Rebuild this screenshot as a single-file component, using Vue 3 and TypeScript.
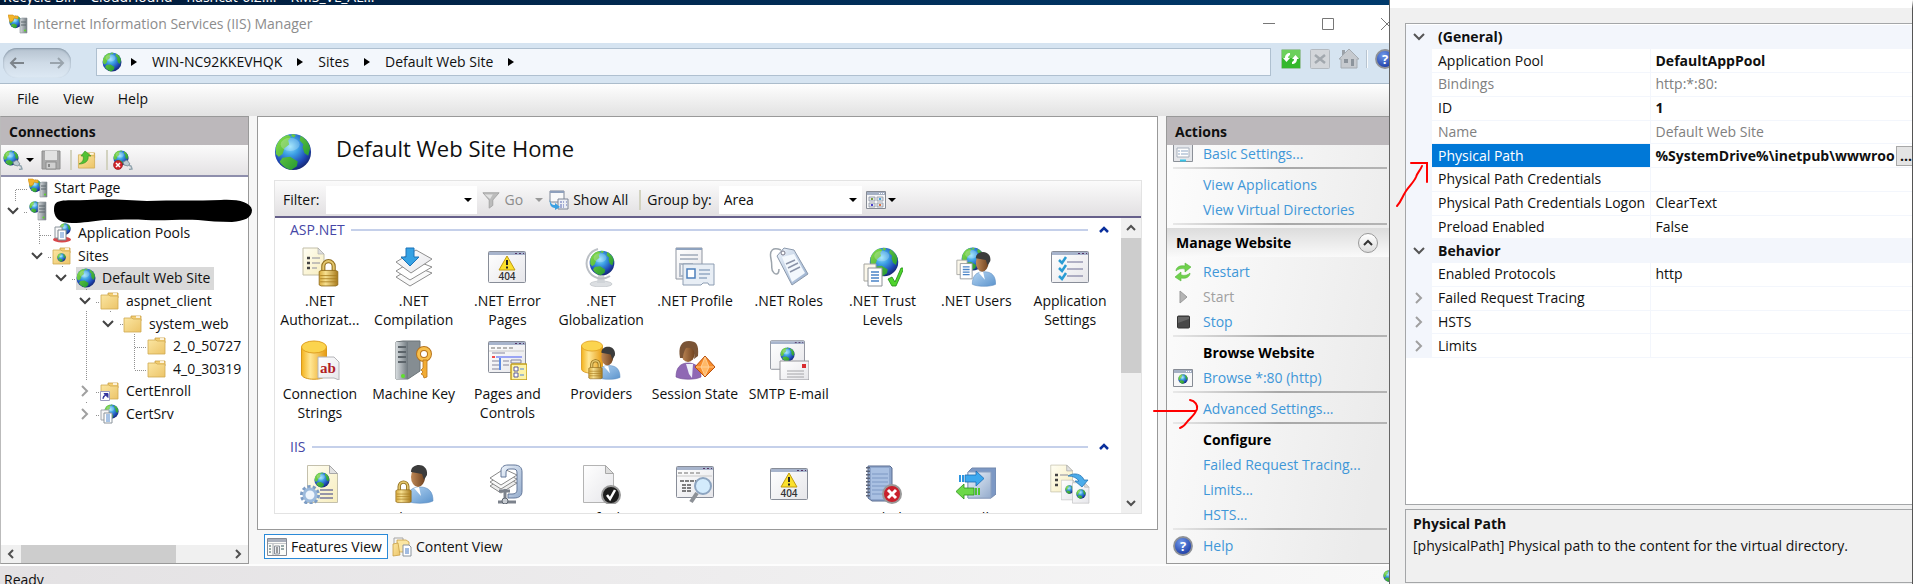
<script setup lang="ts">
import { ref } from 'vue'

interface TreeNode {
  label: string
  icon: string
  level: number
  state?: 'open' | 'closed'
  selected?: boolean
  hidden?: boolean
}

interface Feature {
  icon: string
  lines: string[]
}

interface ActionRow {
  kind: 'link' | 'title' | 'line' | 'header'
  label?: string
  icon?: string
  disabled?: boolean
  arrow?: boolean
}

interface Property {
  name: string
  value?: string
  kind?: 'group' | 'child'
  strong?: boolean
  muted?: boolean
  selected?: boolean
}

const desktop = ['Recycle Bin', 'CloudHound', 'hashcat-6.2....', 'KMS_VL_AL...']
const crumbs = ['WIN-NC92KKEVHQK', 'Sites', 'Default Web Site']
const menus = ['File', 'View', 'Help']

const tree: TreeNode[] = [
  { label: 'Start Page', icon: 'i-start', level: 0 },
  { label: '', icon: 'i-server', level: 0, state: 'open', hidden: true },
  { label: 'Application Pools', icon: 'i-pools', level: 1 },
  { label: 'Sites', icon: 'i-sites', level: 1, state: 'open' },
  { label: 'Default Web Site', icon: 'i-globe', level: 2, state: 'open', selected: true },
  { label: 'aspnet_client', icon: 'i-folder', level: 3, state: 'open' },
  { label: 'system_web', icon: 'i-folder', level: 4, state: 'open' },
  { label: '2_0_50727', icon: 'i-folder', level: 5 },
  { label: '4_0_30319', icon: 'i-folder', level: 5 },
  { label: 'CertEnroll', icon: 'i-vdir', level: 3, state: 'closed' },
  { label: 'CertSrv', icon: 'i-app', level: 3, state: 'closed' }
]

const sections: { name: string; items: Feature[] }[] = [
  {
    name: 'ASP.NET',
    items: [
      { icon: 'f-auth', lines: ['.NET', 'Authorizat...'] },
      { icon: 'f-comp', lines: ['.NET', 'Compilation'] },
      { icon: 'f-404', lines: ['.NET Error', 'Pages'] },
      { icon: 'f-global', lines: ['.NET', 'Globalization'] },
      { icon: 'f-profile', lines: ['.NET Profile'] },
      { icon: 'f-roles', lines: ['.NET Roles'] },
      { icon: 'f-trust', lines: ['.NET Trust', 'Levels'] },
      { icon: 'f-users', lines: ['.NET Users'] },
      { icon: 'f-settings', lines: ['Application', 'Settings'] },
      { icon: 'f-conn', lines: ['Connection', 'Strings'] },
      { icon: 'f-key', lines: ['Machine Key'] },
      { icon: 'f-pages', lines: ['Pages and', 'Controls'] },
      { icon: 'f-providers', lines: ['Providers'] },
      { icon: 'f-session', lines: ['Session State'] },
      { icon: 'f-smtp', lines: ['SMTP E-mail'] }
    ]
  },
  {
    name: 'IIS',
    items: [
      { icon: 'f-asp', lines: ['ASP'] },
      { icon: 'f-authn', lines: ['Authentic...'] },
      { icon: 'f-compress', lines: ['Compression'] },
      { icon: 'f-default', lines: ['Default'] },
      { icon: 'f-browse', lines: ['Directory'] },
      { icon: 'f-404', lines: ['Error Pages'] },
      { icon: 'f-failed', lines: ['Failed'] },
      { icon: 'f-handler', lines: ['Handler'] },
      { icon: 'f-redirect', lines: ['HTTP'] }
    ]
  }
]

const actions: ActionRow[] = [
  { kind: 'link', label: 'Basic Settings...', icon: 'i-basic' },
  { kind: 'line' },
  { kind: 'link', label: 'View Applications' },
  { kind: 'link', label: 'View Virtual Directories' },
  { kind: 'line' },
  { kind: 'header', label: 'Manage Website' },
  { kind: 'link', label: 'Restart', icon: 'i-restart' },
  { kind: 'link', label: 'Start', icon: 'i-play', disabled: true },
  { kind: 'link', label: 'Stop', icon: 'i-stop' },
  { kind: 'line' },
  { kind: 'title', label: 'Browse Website' },
  { kind: 'link', label: 'Browse *:80 (http)', icon: 'i-browse' },
  { kind: 'line' },
  { kind: 'link', label: 'Advanced Settings...', arrow: true },
  { kind: 'line' },
  { kind: 'title', label: 'Configure' },
  { kind: 'link', label: 'Failed Request Tracing...' },
  { kind: 'link', label: 'Limits...' },
  { kind: 'link', label: 'HSTS...' },
  { kind: 'line' },
  { kind: 'link', label: 'Help', icon: 'i-help' }
]

const properties: Property[] = [
  { name: '(General)', kind: 'group' },
  { name: 'Application Pool', value: 'DefaultAppPool', strong: true },
  { name: 'Bindings', value: 'http:*:80:', muted: true },
  { name: 'ID', value: '1', strong: true },
  { name: 'Name', value: 'Default Web Site', muted: true },
  { name: 'Physical Path', value: '%SystemDrive%\\inetpub\\wwwroo', strong: true, selected: true },
  { name: 'Physical Path Credentials' },
  { name: 'Physical Path Credentials Logon', value: 'ClearText' },
  { name: 'Preload Enabled', value: 'False' },
  { name: 'Behavior', kind: 'group' },
  { name: 'Enabled Protocols', value: 'http' },
  { name: 'Failed Request Tracing', kind: 'child' },
  { name: 'HSTS', kind: 'child' },
  { name: 'Limits', kind: 'child' }
]

const filter = ref('')
const groupBy = ref('Area')
</script>

<template>
  <svg class="defs" aria-hidden="true">
    <defs>
      <radialGradient id="sea" cx=".42" cy=".35" r=".68">
        <stop offset="0" stop-color="#8fe0fa" /><stop offset=".35" stop-color="#3c9fe4" />
        <stop offset=".75" stop-color="#1f47b4" /><stop offset="1" stop-color="#15256e" />
      </radialGradient>
      <linearGradient id="land" x1="0" y1="0" x2="1" y2="1">
        <stop offset="0" stop-color="#8be04a" /><stop offset="1" stop-color="#0e8a2c" />
      </linearGradient>
      <linearGradient id="gold" x1="0" y1="0" x2="1" y2="0">
        <stop offset="0" stop-color="#d8aa3c" /><stop offset=".35" stop-color="#f7e090" /><stop offset="1" stop-color="#a87a1c" />
      </linearGradient>
      <linearGradient id="db" x1="0" y1="0" x2="1" y2="0">
        <stop offset="0" stop-color="#f3b21c" /><stop offset=".35" stop-color="#ffe795" /><stop offset="1" stop-color="#e79a10" />
      </linearGradient>
      <linearGradient id="manila" x1="0" y1="0" x2="1" y2="1">
        <stop offset="0" stop-color="#fbe6a2" /><stop offset="1" stop-color="#ecc468" />
      </linearGradient>
      <linearGradient id="paper" x1="0" y1="0" x2="1" y2="1">
        <stop offset="0" stop-color="#ffffff" /><stop offset="1" stop-color="#e6e6ea" />
      </linearGradient>
      <linearGradient id="cream" x1="0" y1="0" x2="1" y2="1">
        <stop offset="0" stop-color="#fffef4" /><stop offset="1" stop-color="#f7edbd" />
      </linearGradient>
      <linearGradient id="steel" x1="0" y1="0" x2="1" y2="1">
        <stop offset="0" stop-color="#eef4fb" /><stop offset="1" stop-color="#93abcc" />
      </linearGradient>
      <linearGradient id="shirt" x1="0" y1="0" x2="1" y2="1">
        <stop offset="0" stop-color="#b4d5f3" /><stop offset="1" stop-color="#5b93cc" />
      </linearGradient>
      <linearGradient id="skin" x1="0" y1="0" x2="1" y2="0">
        <stop offset="0" stop-color="#c08a58" /><stop offset="1" stop-color="#70421f" />
      </linearGradient>
      <linearGradient id="case" x1="0" y1="0" x2="1" y2="0">
        <stop offset="0" stop-color="#d5dadd" /><stop offset="1" stop-color="#6f787e" />
      </linearGradient>
      <radialGradient id="helpblue" cx=".4" cy=".3" r=".8">
        <stop offset="0" stop-color="#6f98ea" /><stop offset="1" stop-color="#12309c" />
      </radialGradient>
    </defs>

    <symbol id="i-globe" viewBox="0 0 40 40">
      <circle cx="20" cy="20" r="19" fill="url(#sea)" />
      <path fill="url(#land)" d="M2 15C4 8 9 3 15 2l3 2-3 4 1 4-5 4-2 6-4 3-3-3zM28 3c5 3 9 7 10 13l-2 8-4-3-2-6 1-3-4-4zM9 26l8-1 8 5-1 5-6 4c-5-1-10-5-12-9zM19 1l4 1-2 3-3-2z" />
      <ellipse cx="17" cy="12" rx="10" ry="7" fill="#fff" opacity=".22" />
    </symbol>
    <symbol id="i-start" viewBox="0 0 20 20">
      <use href="#i-globe" x="1" y="1" width="13" height="14" />
      <path d="M0 1h5l1 1h4v3l-4-1-1 3-3 1z" fill="#f3b52b" stroke="#d08c12" stroke-width=".6" />
      <path d="M12 5l2-1h5v15h-7z" fill="url(#case)" stroke="#8a9298" stroke-width=".6" />
      <path d="M13 8h5M13 11h5" stroke="#5d666c" /><circle cx="17" cy="16.500" r="1" fill="#58d824" />
    </symbol>
    <symbol id="i-server" viewBox="0 0 20 20">
      <use href="#i-globe" x="1" y="0" width="12" height="12" />
      <path d="M10 2l2-1h6v18h-8z" fill="url(#case)" stroke="#8a9298" stroke-width=".6" />
      <path d="M11 5h6M11 8h6M11 11h6" stroke="#5d666c" /><circle cx="15.500" cy="16.500" r="1" fill="#58d824" />
    </symbol>
    <symbol id="i-pools" viewBox="0 0 20 20">
      <use href="#i-globe" x="7" y="0" width="12" height="12" />
      <ellipse cx="10" cy="16.500" rx="9" ry="3" fill="#d8474a" />
      <path d="M3 4h7v11H3z" fill="#f8f8f8" stroke="#8b949c" /><path d="M6 7h8v10H6z" fill="#fff" stroke="#7c868e" />
      <path d="M8 10h4M8 12h4M8 14h4" stroke="#5b8fd0" />
    </symbol>
    <symbol id="i-folder" viewBox="0 0 20 20">
      <path d="M8 2h10v5H8z" fill="#f5cf72" stroke="#c9a045" stroke-width=".8" /><path d="M13 3h4" stroke="#fff" stroke-width="1.500" />
      <path d="M1 4h8l1 1h8v13H1z" fill="url(#manila)" stroke="#cfa950" stroke-width=".8" />
    </symbol>
    <symbol id="i-sites" viewBox="0 0 20 20"><use href="#i-folder" width="20" height="20" /><use href="#i-globe" x="5" y="7" width="9" height="9" /></symbol>
    <symbol id="i-vdir" viewBox="0 0 20 20">
      <use href="#i-folder" width="20" height="20" /><path d="M.500 10.500h9v9h-9z" fill="#fff" stroke="#9a9ac0" />
      <path d="M3 18c0-3 1-4 3-4M4 12.500l4 0v4z" fill="#34349c" stroke="#34349c" />
    </symbol>
    <symbol id="i-app" viewBox="0 0 20 20">
      <use href="#i-globe" x="4" y="0" width="15" height="15" />
      <path d="M1 6h8v10H1z" fill="#f6f6f6" stroke="#a0a6ac" /><path d="M4 9h8v10H4z" fill="#fff" stroke="#8b949c" />
      <path d="M6 11h4M6 13h4M6 15h4M6 17h4" stroke="#4f87cc" />
    </symbol>
    <symbol id="i-connect" viewBox="0 0 20 20">
      <use href="#i-globe" width="16" height="16" />
      <path d="M10 12l4-2 3 4-2 2-4-1z" fill="#bccbd3" stroke="#71828c" stroke-width=".8" /><path d="M15 15l3 1 1 3-3 .500" fill="none" stroke="#91a4ae" stroke-width="1.500" />
    </symbol>
    <symbol id="i-disconnect" viewBox="0 0 20 20">
      <use href="#i-connect" width="20" height="20" /><circle cx="5" cy="15" r="4.500" fill="#d2232a" stroke="#8d1418" stroke-width=".6" />
      <path d="M3 13l4 4M7 13l-4 4" stroke="#fff" stroke-width="1.500" />
    </symbol>
    <symbol id="i-save" viewBox="0 0 20 20">
      <path d="M1 1h18v18H1z" fill="#a9a9a9" stroke="#8e8e8e" /><path d="M4 1h12v9H4z" fill="#e2e2e2" /><path d="M5 12h10v7H5z" fill="#cfcfcf" stroke="#8e8e8e" /><path d="M7 14h2v3H7z" fill="#888" />
    </symbol>
    <symbol id="i-up" viewBox="0 0 20 20">
      <use href="#i-folder" y="1" width="20" height="19" /><path d="M2 14c4-2 5-5 4-8H4l4-5 6 5h-3c1 4-2 8-9 8z" fill="#52c234" stroke="#2f8f1c" stroke-width=".6" />
    </symbol>
    <symbol id="i-win" viewBox="0 0 20 20">
      <path d="M.500 1.500h19v17H.500z" fill="#f7f7f8" stroke="#868b94" /><path d="M1 2h18v3H1z" fill="#a5b0c4" /><path d="M13 3.500h1M15 3.500h1M17 3.500h1" stroke="#fff" />
    </symbol>
    <symbol id="i-browse" viewBox="0 0 20 20"><use href="#i-win" width="20" height="20" /><use href="#i-globe" x="5" y="6" width="10" height="10" /></symbol>
    <symbol id="i-basic" viewBox="0 0 20 20">
      <path d="M.500 0h19v17.500H.500z" fill="#e4e6ea" stroke="#8b9098" /><path d="M4 4h12v9H4z" fill="#fff" stroke="#a8b0bc" /><path d="M5 7h2M8 7h7M5 10h2M8 10h7" stroke="#8fa7c4" />
      <path d="M7 16.500h6" stroke="#38c4e8" stroke-width="2" />
    </symbol>
    <symbol id="i-features" viewBox="0 0 20 20">
      <path d="M.500 1.500h19v17H.500z" fill="#fbfbf8" stroke="#868b94" /><path d="M1 2h18v3H1z" fill="#a9afbb" /><path d="M1 6.500h18" stroke="#c5c8cc" />
      <path d="M6 7v11" stroke="#a0a4ac" /><path d="M2 9h2M2 12h2M2 15h2M14 9h3M14 12h3" stroke="#9aa" stroke-width="2" /><path d="M7.500 9h5v8h-5z" fill="#eceef2" stroke="#8a9098" /><path d="M9 11h2M9 13h2M9 15h2" stroke="#444" />
    </symbol>
    <symbol id="i-content" viewBox="0 0 20 20">
      <path d="M2 1h9v12H2z" fill="#f5f5f5" stroke="#a5a5a5" /><path d="M5 3h9l3 2v10H5z" fill="#fbe6a2" stroke="#c9a045" stroke-width=".8" /><path d="M1 7l5-1 2 12-7 1z" fill="url(#manila)" stroke="#c9a045" stroke-width=".8" />
      <path d="M11 8h6l2 2v9h-8z" fill="#fff" stroke="#8b949c" /><path d="M13 12h4M13 14h4M13 16h4" stroke="#4478c4" />
    </symbol>
    <symbol id="i-thumbs" viewBox="0 0 20 20">
      <use href="#i-win" width="20" height="20" /><path d="M3 7h6v4H3zM11 7h6v4h-6zM3 13h6v4H3zM11 13h6v4h-6z" fill="#dfe3ea" stroke="#8d94a2" stroke-width=".8" />
      <path d="M5 9h2" stroke="#7a9c3c" stroke-width="2" /><path d="M13 9h2" stroke="#4aa4d4" stroke-width="2" /><path d="M5 15h2" stroke="#4a3ccc" stroke-width="2" /><path d="M13 15h2" stroke="#dc7444" stroke-width="2" />
    </symbol>
    <symbol id="i-showall" viewBox="0 0 20 20">
      <path d="M1 1h14v11H1z" fill="#fafafa" stroke="#7e8696" /><path d="M1 2h14" stroke="#8fa0bc" stroke-width="2" /><path d="M9 9h10v10H9z" fill="#eceef5" stroke="#7e8696" />
      <path d="M11 12h2M14 12h1M17 12h1M11 15h2M14 15h1M17 15h1M11 17h2M14 17h1" stroke="#5a6bb4" /><path d="M1 9c0 4 2 6 5 6v-2l5 4-5 3v-2c-4 0-6-4-5-9z" fill="#3aa0e2" />
    </symbol>
    <symbol id="i-funnel" viewBox="0 0 20 20"><path d="M1 2h18l-7 8v6l-4 3v-9z" fill="#bcbcbc" stroke="#a2a2a2" /><path d="M3 4h9l-3 5z" fill="#e2e2e2" /></symbol>
    <symbol id="i-restart" viewBox="0 0 20 20">
      <path d="M3 9c0-4 4-6 9-5V1l6 4-6 5V7C8 6 5 7 3 9z" fill="#6fd24c" stroke="#58b63e" stroke-width=".6" /><path d="M17 11c0 4-4 6-9 5v3l-6-4 6-5v3c4 1 7 0 9-2z" fill="#6fd24c" stroke="#58b63e" stroke-width=".6" />
    </symbol>
    <symbol id="i-play" viewBox="0 0 20 20"><path d="M7 4v12l7-6z" fill="#b4b4b4" stroke="#9a9a9a" /></symbol>
    <symbol id="i-stop" viewBox="0 0 20 20"><rect x="4.500" y="4" width="12" height="12" rx="1" fill="#484848" stroke="#333" /><path d="M5 11l11-4V5H5z" fill="#666" /></symbol>
    <symbol id="i-help" viewBox="0 0 20 20">
      <circle cx="10" cy="10" r="9" fill="url(#helpblue)" stroke="#8d9096" stroke-width="1.800" />
      <text x="10" y="15" text-anchor="middle" font-size="13" font-weight="700" font-family="Open Sans, sans-serif" fill="#fff">?</text>
    </symbol>
    <symbol id="i-refresh" viewBox="0 0 20 20">
      <rect x=".500" y=".500" width="19" height="19" rx="1" fill="#35b82c" stroke="#9fc4a4" /><path d="M1 1h18v8H1z" fill="#8fe07c" opacity=".6" />
      <path d="M9 4c-3 0-5 2-5 5H2l3.500 4L9 9H7c0-2 1-2 2-3zM11 15c3 0 5-2 5-5h2l-3.500-4L11 10h2c0 2-1 2-2 3z" fill="#fff" />
    </symbol>
    <symbol id="i-cancel" viewBox="0 0 20 20"><rect x=".500" y=".500" width="19" height="19" rx="1" fill="#d3d6da" stroke="#b4bac0" /><path d="M5 6l10 8M15 6L5 14" stroke="#a2a8ae" stroke-width="2.500" /></symbol>
    <symbol id="i-home" viewBox="0 0 20 20"><path d="M3 1h3v5H3z" fill="#9ba1a8" /><path d="M10 0L0 10h2v9h16v-9h2z" fill="#c6cacf" stroke="#a6acb2" /><path d="M5 10h4v4H5z" fill="#8c949c" /><path d="M12 10h3v7h-3z" fill="#8c949c" /></symbol>

    <symbol id="p-lock" viewBox="0 0 20 28">
      <path d="M5 13V8a5 5 0 0 1 10 0v5" fill="none" stroke="#8e6c1c" stroke-width="4" /><path d="M5 13V8a5 5 0 0 1 10 0v5" fill="none" stroke="#e3c66c" stroke-width="2" />
      <path d="M1 13l2-1h14l2 1v13l-2 1H3l-2-1z" fill="url(#gold)" stroke="#8e6818" stroke-width=".8" /><path d="M2 17h16M2 20h16M2 23h16" stroke="#a87c20" stroke-width=".8" />
    </symbol>
    <symbol id="p-man" viewBox="0 0 28 40">
      <path d="M1 37c0-9 4-14 13-14s13 5 13 14c-6 3-20 3-26 0z" fill="url(#shirt)" stroke="#5b8cc0" stroke-width=".6" /><path d="M8 24l5-1 2 9z" fill="#fff" />
      <ellipse cx="12" cy="13" rx="7" ry="10" fill="url(#skin)" /><path d="M5 8c0-5 4-7 8-7s9 3 8 10l-3 5-2-6z" fill="#3c3c3c" />
    </symbol>
    <symbol id="p-sheets" viewBox="0 0 20 24">
      <path d="M1 1h12v17H1z" fill="#fbf7ea" stroke="#a5a5a0" /><path d="M5 5h14v18H5z" fill="#fff" stroke="#8c9298" /><path d="M8 9h8M8 12h8M8 15h8M8 18h8" stroke="#4a84c8" stroke-width="1.500" />
    </symbol>
    <symbol id="p-win" viewBox="0 0 38 32">
      <rect x=".500" y=".500" width="37" height="31" rx="1" fill="url(#paper)" stroke="#888d98" /><path d="M1 1h36v3H1z" fill="#a7b4cc" /><path d="M27 2.500h2M31 2.500h2M35 2.500h1" stroke="#536" />
    </symbol>
    <symbol id="p-doc" viewBox="0 0 32 40"><path d="M.500 1.500h22l8 8v29H.500z" fill="url(#paper)" stroke="#b4b4b4" /><path d="M22.500 1.500v8h8z" fill="#ddd" stroke="#a8a8a8" /></symbol>
    <symbol id="p-creamdoc" viewBox="0 0 32 40"><path d="M.500 1.500h22l8 8v29H.500z" fill="url(#cream)" stroke="#c4c0ac" /><path d="M22.500 1.500v8h8z" fill="#e2e2e2" stroke="#a8a8a8" /></symbol>
    <symbol id="p-db" viewBox="0 0 26 40">
      <path d="M.500 7v27c0 7 25 7 25 0V7z" fill="url(#db)" stroke="#d8981c" /><ellipse cx="13" cy="7" rx="12.500" ry="6" fill="#fbd44e" stroke="#e0a020" />
    </symbol>

    <symbol id="f-auth" viewBox="0 0 40 40">
      <path d="M3 1h15l6 6v21H3z" fill="url(#cream)" stroke="#c2bea8" /><path d="M18 1v6h6z" fill="#ddd" stroke="#aaa" stroke-width=".6" />
      <path d="M7 11h3M7 16h3M7 21h3" stroke="#444" stroke-width="2.500" /><path d="M12 11h8M12 16h8M12 21h5" stroke="#8c8c9c" /><use href="#p-lock" x="18" y="11" width="21" height="29" />
    </symbol>
    <symbol id="f-comp" viewBox="0 0 40 40">
      <path d="M2 30l18-11 18 7-22 13z" fill="#fafafa" stroke="#8e8e8e" /><path d="M2 24l18-11 18 7-22 13z" fill="#fff" stroke="#8e8e8e" /><path d="M2 15L22 3l16 9-21 14z" fill="url(#paper)" stroke="#8e8e8e" />
      <path d="M12 1h8v9h5l-9 9-9-9h5z" fill="#35a2e4" stroke="#1c72b8" />
    </symbol>
    <symbol id="f-404" viewBox="0 0 40 40">
      <use href="#p-win" x="1" y="4" width="38" height="32" /><path d="M20 9l8 14H12z" fill="#fbe12c" stroke="#c09a10" stroke-linejoin="round" /><path d="M20 13v5M20 19.500v2" stroke="#222" stroke-width="2" />
      <text x="20" y="33" text-anchor="middle" font-size="10" font-weight="600" font-family="Open Sans, sans-serif" fill="#333">404</text>
    </symbol>
    <symbol id="f-global" viewBox="0 0 40 40">
      <ellipse cx="20" cy="37" rx="11" ry="3" fill="#dcdfe2" stroke="#b6babf" stroke-width=".6" /><path d="M17 28h6l1 8h-8z" fill="#d0d4d8" /><path d="M17 2a15 15 0 1 0 12 27" fill="none" stroke="#bcc0c6" stroke-width="2" />
      <use href="#i-globe" x="8" y="3" width="26" height="26" />
    </symbol>
    <symbol id="f-profile" viewBox="0 0 40 40">
      <path d="M1 1h26v31H1z" fill="url(#paper)" stroke="#8f95a0" /><path d="M1 2h26" stroke="#8ea2be" stroke-width="2" /><path d="M5 8h18M5 12h18M5 17h12v12H5z" fill="none" stroke="#b4bcc8" stroke-width="2" />
      <path d="M8 17h31v21h-5l-1-2h-5l-2 2H8z" fill="#e8eef5" stroke="#8d9db2" /><path d="M12 22h8v9h-8z" fill="#fff" stroke="#4d80bc" stroke-width="1.500" /><path d="M24 23h11M24 27h11M24 31h8" stroke="#92a9c4" stroke-width="1.500" />
    </symbol>
    <symbol id="f-roles" viewBox="0 0 40 40">
      <path d="M12 3C4 0 0 3 2 12s-1 11 3 14 5-1 5-4" fill="none" stroke="#9ca4ac" stroke-width="1.500" /><path d="M8 9l7-8 10 2 14 24-16 11z" fill="url(#steel)" stroke="#8b99ac" />
      <path d="M13 10l12-3 11 19-13 9z" fill="#f3f8fd" /><circle cx="14" cy="6" r="2" fill="#fff" stroke="#778" /><path d="M17 17l9-4M19 21l10-5M21 25l10-5" stroke="#8a93a8" stroke-width="1.500" />
    </symbol>
    <symbol id="f-trust" viewBox="0 0 40 40">
      <use href="#i-globe" x="6" y="0" width="30" height="30" /><use href="#p-sheets" x="0" y="16" width="20" height="24" />
      <path d="M25 32l4-2 3 5 6-14 3 0-8 18h-4z" fill="#4fd42c" stroke="#1f8c14" stroke-width=".8" />
    </symbol>
    <symbol id="f-users" viewBox="0 0 40 40"><use href="#i-globe" x="5" y="0" width="24" height="24" /><use href="#p-sheets" x="0" y="12" width="17" height="21" /><use href="#p-man" x="15" y="4" width="26" height="36" /></symbol>
    <symbol id="f-settings" viewBox="0 0 40 40">
      <use href="#p-win" x="1" y="4" width="38" height="32" /><path d="M9 13l3 3 4-6M9 21l3 3 4-6M9 29l3 3 4-6" fill="none" stroke="#2a9cd4" stroke-width="2.500" /><path d="M17 15h16M17 22h16M17 29h16" stroke="#6c6c94" />
    </symbol>
    <symbol id="f-conn" viewBox="0 0 40 40">
      <use href="#p-db" x="1" y="0" width="26" height="40" /><path d="M18 17h16l5 5v18l-5-2H18z" fill="url(#paper)" stroke="#b4b4b8" />
      <text x="28" y="33" text-anchor="middle" font-size="15" font-weight="700" font-family="Liberation Serif, serif" fill="#b01c24">ab</text>
    </symbol>
    <symbol id="f-key" viewBox="0 0 40 40">
      <path d="M2 2l7-1h17v30l-12 8H2z" fill="#858d92" stroke="#6c7478" /><path d="M2 2h12v37H2z" fill="url(#case)" /><path d="M4 7h8M4 12h8M4 17h8M4 22h8" stroke="#5c646a" stroke-width="2" /><circle cx="9" cy="36" r="2" fill="#5fe02c" />
      <circle cx="30" cy="14" r="5.500" fill="none" stroke="#b8741c" stroke-width="5" /><circle cx="30" cy="14" r="5.500" fill="none" stroke="#f7bf4c" stroke-width="3" /><path d="M29 20h4v17l-3 1-1-3-2-1 2-2-2-2 2-2z" fill="#f2ac34" stroke="#b8741c" stroke-width=".8" />
    </symbol>
    <symbol id="f-pages" viewBox="0 0 40 40">
      <use href="#p-win" x="1" y="1" width="38" height="32" /><path d="M4 8h4M10 8h4M16 8h4M22 8h4" stroke="#b4b4b4" stroke-width="2" /><path d="M2 11h35" stroke="#c8c8c8" /><path d="M5 17h3" stroke="#f04c4c" stroke-width="2" /><path d="M9 17h26" stroke="#9aa4f4" stroke-width="2" />
      <path d="M5 13h13M5 21h7M5 25h7M5 29h7M16 21h6M16 25h6M24 20h10v3H24z" fill="none" stroke="#85859c" /><path d="M13 18v12" stroke="#5c8ce4" stroke-width="2" />
      <rect x="24" y="24" width="16" height="16" rx="1" fill="#fdf3a8" stroke="#c4a01c" stroke-width="1.500" /><path d="M27 27h4v4h-4zM27 33h4v4h-4z" fill="#fff" stroke="#5c5c9c" /><path d="M33 29h4M33 35h4" stroke="#4c84e4" />
    </symbol>
    <symbol id="f-providers" viewBox="0 0 40 40"><use href="#p-db" x="0" y="0" width="22" height="34" /><use href="#p-man" x="16" y="6" width="24" height="34" /><use href="#p-lock" x="7" y="18" width="15" height="22" /></symbol>
    <symbol id="f-session" viewBox="0 0 40 40">
      <path d="M1 37c0-9 4-14 12-14s13 5 13 14c-6 3-19 3-25 0z" fill="#8f68b4" stroke="#6f4c94" stroke-width=".6" /><path d="M11 24h7l-1 14-3-4z" fill="#eef0fa" /><ellipse cx="13" cy="13" rx="7" ry="9" fill="url(#skin)" /><path d="M5 18C3 7 6 1 14 1c7 0 10 3 9 15l-4 3c2-8-1-12-8-11-2 3-3 7-3 10z" fill="#7a5436" />
      <path d="M30 16l10 11-10 10-10-10z" fill="#f78b2a" stroke="#b8500c" /><path d="M30 17l4 10-4 9-4-9zM21 27h18" fill="#ffb868" stroke="#ffd8a4" stroke-width=".8" />
    </symbol>
    <symbol id="f-smtp" viewBox="0 0 40 40">
      <use href="#p-win" x="1" y="0" width="35" height="30" /><use href="#i-globe" x="11" y="7" width="15" height="15" /><path d="M11 21h29v19H11z" fill="url(#paper)" stroke="#96969c" />
      <path d="M33 24h4v4h-4z" fill="#d82c30" /><path d="M18 31h17M18 34h17M18 37h17" stroke="#a4a4a8" />
    </symbol>
    <symbol id="f-asp" viewBox="0 0 40 40">
      <use href="#p-creamdoc" x="7" y="0" width="32" height="40" /><use href="#i-globe" x="14" y="8" width="16" height="16" /><path d="M20 26h13M20 30h13M20 34h13" stroke="#77779c" stroke-width="1.500" />
      <circle cx="10" cy="31" r="8" fill="none" stroke="#7c9cc4" stroke-width="4" stroke-dasharray="3 2" /><circle cx="10" cy="31" r="6" fill="#eef5fc" stroke="#9cbadc" stroke-width="3" />
    </symbol>
    <symbol id="f-authn" viewBox="0 0 40 40"><use href="#p-man" x="11" y="0" width="30" height="40" /><use href="#p-lock" x="1" y="15" width="17" height="25" /></symbol>
    <symbol id="f-compress" viewBox="0 0 40 40">
      <path d="M3 22l14-9 13 6-16 10z" fill="#ececec" stroke="#888" /><path d="M3 18L17 9l13 6-16 10z" fill="#f8f8f8" stroke="#888" /><path d="M3 14L17 5l13 6-16 10z" fill="#fff" stroke="#888" />
      <path d="M14 13V7c0-4 3-6 7-6h6c5 0 8 2 8 7v19c0 5-3 7-8 7h-6v-4h4c3 0 5-1 5-4V9c0-3-1-4-4-4h-3c-3 0-4 1-4 4v4z" fill="url(#steel)" stroke="#64789a" /><path d="M18 25v11M11 38h18M12 27h11" stroke="#7c828c" stroke-width="3" /><circle cx="18" cy="37" r="3" fill="#c8ccd2" stroke="#5c646e" />
    </symbol>
    <symbol id="f-default" viewBox="0 0 40 40"><use href="#p-doc" x="2" y="0" width="32" height="40" /><circle cx="30" cy="31" r="9" fill="#1c1c1c" stroke="#999" stroke-width="2" /><path d="M26 31l3 4 5-9" fill="none" stroke="#fff" stroke-width="2.500" /></symbol>
    <symbol id="f-browse" viewBox="0 0 40 40">
      <use href="#p-win" x="1" y="2" width="38" height="32" /><path d="M3 9h4M9 9h4M15 9h4M21 9h4" stroke="#b4b4b4" stroke-width="2" /><path d="M2 12h35" stroke="#c8c8c8" /><path d="M5 17h16M7 21h10M7 24h10M7 27h10" stroke="#555" stroke-width="1.500" stroke-dasharray="4 1" />
      <path d="M22 29l-6 9" stroke="#8c9096" stroke-width="4" /><circle cx="28" cy="22" r="8" fill="#d3ebfc" stroke="#8ca4c0" stroke-width="2" />
    </symbol>
    <symbol id="f-failed" viewBox="0 0 40 40">
      <path d="M5 2h22l2 2v33l-20 0-4-3z" fill="#8ea6cc" stroke="#5a6c90" /><path d="M8 4h18v31H8z" fill="#a9c0e2" /><path d="M9 10h16M9 14h16M9 18h16M9 22h16M9 26h16M9 30h16" stroke="#7c98c4" /><path d="M5 3v31" stroke="#5c6478" stroke-width="4" stroke-dasharray="1.500 2" />
      <circle cx="29" cy="30" r="9" fill="#c9202c" stroke="#999" stroke-width="2" /><path d="M25 26l8 8M33 26l-8 8" stroke="#fff" stroke-width="3" />
    </symbol>
    <symbol id="f-handler" viewBox="0 0 40 40">
      <path d="M12 8l4-4h24v26l-5 4H12z" fill="#7c98c4" stroke="#7388ac" /><path d="M12 8h23v26H12z" fill="url(#steel)" stroke="#8ca0c0" />
      <path d="M3 11h2v7H3zM6 11h2v7H6z" fill="#2c94e0" /><path d="M9 11h11V7l8 7.500-8 7.500v-4H9z" fill="#3ca8ee" stroke="#1a6cb4" stroke-width=".8" /><path d="M22 24h2v7h-2zM19 24h2v7h-2z" fill="#4cc42c" /><path d="M18 24H8v-4L0 27.500 8 35v-4h10z" fill="#6cd848" stroke="#2c901c" stroke-width=".8" />
    </symbol>
    <symbol id="f-redirect" viewBox="0 0 40 40">
      <use href="#p-creamdoc" x="0" y="0" width="24" height="29" /><path d="M5 11h3M5 16h3M5 21h3" stroke="#444" stroke-width="2.500" /><path d="M10 11h8" stroke="#8c8c9c" />
      <use href="#p-doc" x="11" y="15" width="17" height="22" /><use href="#i-globe" x="15" y="21" width="9" height="9" /><use href="#p-doc" x="22" y="18" width="18" height="22" /><use href="#i-globe" x="26" y="25" width="10" height="10" />
      <path d="M18 12c6-4 14-2 16 4h4l-6 7-7-6h4c-2-3-6-5-11-5z" fill="#4cacea" stroke="#2474b4" stroke-width=".8" />
    </symbol>
  </svg>

  <div class="screen">
    <div class="left">
      <div class="desktop"><span v-for="d in desktop" :key="d">{{ d }}</span></div>

      <header class="titlebar">
        <svg class="s20"><use href="#i-start" /></svg>
        <span class="caption">Internet Information Services (IIS) Manager</span>
        <div class="winbtns">
          <button type="button" aria-label="Minimize"><svg width="12" height="12"><path d="M0 5.500h12" stroke="#777" /></svg></button>
          <button type="button" aria-label="Maximize"><svg width="12" height="12"><path d="M.500.500h11v11H.500z" fill="none" stroke="#777" /></svg></button>
          <button type="button" aria-label="Close"><svg width="12" height="12"><path d="M0 0l12 12M12 0L0 12" stroke="#777" /></svg></button>
        </div>
      </header>

      <div class="navbar">
        <div class="travel">
          <button type="button" aria-label="Back"><svg width="16" height="14" fill="none" stroke="#7d848b" stroke-width="2"><path d="M15 7H2M7 2L2 7l5 5" /></svg></button>
          <button type="button" aria-label="Forward"><svg width="16" height="14" fill="none" stroke="#9aa4ad" stroke-width="2"><path d="M1 7h13M9 2l5 5-5 5" /></svg></button>
        </div>
        <nav class="address">
          <svg class="s20"><use href="#i-globe" /></svg>
          <svg class="tri" viewBox="0 0 6 8"><path d="M0 0l6 4-6 4z" /></svg>
          <template v-for="c in crumbs" :key="c">
            <a href="#">{{ c }}</a>
            <svg class="tri" viewBox="0 0 6 8"><path d="M0 0l6 4-6 4z" /></svg>
          </template>
        </nav>
        <div class="navtools">
          <button type="button" aria-label="Refresh"><svg class="s20"><use href="#i-refresh" /></svg></button>
          <button type="button" aria-label="Stop"><svg class="s20"><use href="#i-cancel" /></svg></button>
          <button type="button" aria-label="Home"><svg class="s20"><use href="#i-home" /></svg></button>
          <i class="navsep"></i>
          <button type="button" aria-label="Help"><svg class="s20"><use href="#i-help" /></svg></button>
        </div>
      </div>

      <div class="menubar"><button v-for="m in menus" :key="m" type="button">{{ m }}</button></div>

      <div class="body">
        <aside class="panel connections">
          <h2 class="panelhead">Connections</h2>
          <div class="treetools">
            <button type="button" aria-label="Connect" class="drop"><svg class="s20"><use href="#i-connect" /></svg><svg class="down" viewBox="0 0 8 4"><path d="M0 0h8L4 4z" /></svg></button>
            <button type="button" aria-label="Save"><svg class="s20"><use href="#i-save" /></svg></button>
            <i class="sep"></i>
            <button type="button" aria-label="Up"><svg class="s20"><use href="#i-up" /></svg></button>
            <i class="sep"></i>
            <button type="button" aria-label="Disconnect"><svg class="s20"><use href="#i-disconnect" /></svg></button>
          </div>
          <div class="treewrap">
            <ul class="tree">
              <li v-for="(n, i) in tree" :key="i" :class="'level' + n.level">
                <button v-if="n.state" class="twist" type="button" aria-label="Toggle">
                  <svg v-if="n.state === 'open'" width="12" height="12" fill="none" stroke="#444" stroke-width="2"><path d="M1 3l5 5 5-5" /></svg>
                  <svg v-else width="12" height="12" fill="none" stroke="#a0a0a0" stroke-width="2"><path d="M3 1l5 5-5 5" /></svg>
                </button>
                <i v-else class="twist"></i>
                <a href="#" :class="{ selected: n.selected }"><svg class="s20"><use :href="'#' + n.icon" /></svg><span>{{ n.label }}</span></a>
                <svg v-if="n.hidden" class="scribble" viewBox="0 0 200 24"><path d="M3 4C8 0 20 2 34 1c22-2 40 0 60 1 26-1 50 0 74-1 16-1 30 2 31 10 0 8-8 11-20 12-12 0-24-1-34-2-18-1-34 1-52 0-16-1-28 0-42 0-12 1-20 3-32 3-12 0-17-4-18-12 0-4 0-6 2-8z" /></svg>
              </li>
            </ul>
            <svg class="dots" width="160" height="248" aria-hidden="true">
              <path d="M15.500 13v11M16 12.500h12M24 35.500h4M39.500 46v22M40 58.500h12M48 80.500h4M62.500 89v2M72 102.500h3M86.500 112v2M96 125.500h3M110.500 134v2M120 147.500h3M134.500 157v36M135 170.500h12M135 193.500h12M86.500 134v70M96 215.500h3M86.500 225v2M96 238.500h3" />
            </svg>
          </div>
          <div class="hscroll">
            <button type="button" aria-label="Scroll left"><svg width="10" height="10" fill="none" stroke="#505050" stroke-width="2"><path d="M7 1L3 5l4 4" /></svg></button>
            <div class="htrack"><div class="hthumb"></div></div>
            <button type="button" aria-label="Scroll right"><svg width="10" height="10" fill="none" stroke="#505050" stroke-width="2"><path d="M3 1l4 4-4 4" /></svg></button>
          </div>
        </aside>

        <main class="center">
          <div class="workspace">
            <div class="pagehead"><svg class="big"><use href="#i-globe" /></svg><h1>Default Web Site Home</h1></div>
            <div class="features">
              <div class="filterbar">
                <label for="filter">Filter:</label>
                <div class="combo filtercombo"><input id="filter" v-model="filter" type="text" /><svg class="down" viewBox="0 0 8 4"><path d="M0 0h8L4 4z" /></svg></div>
                <button type="button" class="go"><svg class="s18"><use href="#i-funnel" /></svg>Go<svg class="down" viewBox="0 0 8 4"><path d="M0 0h8L4 4z" /></svg></button>
                <button type="button" class="showall"><svg class="s20"><use href="#i-showall" /></svg>Show All</button>
                <i class="sep"></i>
                <label for="group">Group by:</label>
                <div class="combo groupcombo"><select id="group" v-model="groupBy"><option>Area</option><option>Category</option></select><svg class="down" viewBox="0 0 8 4"><path d="M0 0h8L4 4z" /></svg></div>
                <button type="button" class="thumbs" aria-label="View"><svg class="s20"><use href="#i-thumbs" /></svg><svg class="down" viewBox="0 0 8 4"><path d="M0 0h8L4 4z" /></svg></button>
              </div>
              <div class="listwrap">
                <div class="list">
                  <section v-for="s in sections" :key="s.name">
                    <h3><span>{{ s.name }}</span><i></i><svg width="10" height="8" fill="none" stroke="#0a2f9c" stroke-width="2.500"><path d="M1 6l4-4 4 4" /></svg></h3>
                    <div class="grid">
                      <button v-for="f in s.items" :key="f.lines.join(' ')" type="button"><svg class="s40"><use :href="'#' + f.icon" /></svg><span v-for="l in f.lines" :key="l">{{ l }}</span></button>
                    </div>
                  </section>
                </div>
                <div class="vscroll">
                  <button type="button" aria-label="Scroll up"><svg width="12" height="10" fill="none" stroke="#505050" stroke-width="2"><path d="M2 7l4-4 4 4" /></svg></button>
                  <div class="vtrack"><div class="vthumb"></div></div>
                  <button type="button" aria-label="Scroll down"><svg width="12" height="10" fill="none" stroke="#505050" stroke-width="2"><path d="M2 3l4 4 4-4" /></svg></button>
                </div>
              </div>
            </div>
          </div>
          <div class="tabs">
            <button type="button" class="current"><svg class="s20"><use href="#i-features" /></svg>Features View</button>
            <button type="button"><svg class="s20"><use href="#i-content" /></svg>Content View</button>
          </div>
        </main>

        <aside class="panel actions">
          <h2 class="panelhead">Actions</h2>
          <div class="actionlist">
            <template v-for="(a, i) in actions" :key="i">
              <hr v-if="a.kind === 'line'" />
              <h3 v-else-if="a.kind === 'header'">{{ a.label }}<button type="button" aria-label="Collapse"><svg width="10" height="8" fill="none" stroke="#333" stroke-width="2"><path d="M1 6l4-4 4 4" /></svg></button></h3>
              <h4 v-else-if="a.kind === 'title'">{{ a.label }}</h4>
              <div v-else class="action">
                <svg class="s20"><use v-if="a.icon" :href="'#' + a.icon" /></svg>
                <a href="#" :class="{ disabled: a.disabled }">{{ a.label }}</a>
                <svg v-if="a.arrow" class="mark markleft" viewBox="0 0 48 34"><path d="M1 15h42M37 4c5 1 8 5 7 9-2 6-7 9-10 13-2 3-4 5-7 6" /></svg>
              </div>
            </template>
          </div>
        </aside>
      </div>

      <footer class="status"><span>Ready</span><svg class="s12"><use href="#i-globe" /></svg></footer>
    </div>

    <section class="dialog">
      <div class="gridbox">
        <table>
          <colgroup><col class="cgutter" /><col class="cname" /><col /></colgroup>
          <tbody>
            <tr v-for="p in properties" :key="p.name" :class="{ group: p.kind === 'group', muted: p.muted, picked: p.selected }">
              <td class="gutter">
                <svg v-if="p.kind === 'group'" width="12" height="12" fill="none" stroke="#555" stroke-width="2"><path d="M1 3l5 5 5-5" /></svg>
                <svg v-else-if="p.kind === 'child'" width="12" height="12" fill="none" stroke="#a0a0a0" stroke-width="2"><path d="M3 1l5 5-5 5" /></svg>
                <svg v-if="p.selected" class="mark markright" viewBox="0 0 36 48"><path d="M2 45c4-4 5-9 9-15s8-9 10-14c1-4 4-6 6-11M16 2h16v19" /></svg>
              </td>
              <th v-if="p.kind === 'group'" colspan="2" scope="rowgroup">{{ p.name }}</th>
              <template v-else>
                <th scope="row">{{ p.name }}</th>
                <td class="value" :class="{ strong: p.strong }"><div v-if="p.selected" class="pathcell"><span>{{ p.value }}</span><button type="button">...</button></div><template v-else>{{ p.value }}</template></td>
              </template>
            </tr>
          </tbody>
        </table>
      </div>
      <div class="describe"><h2>Physical Path</h2><p>[physicalPath] Physical path to the content for the virtual directory.</p></div>
    </section>
  </div>
</template>

<style>
body { margin: 0; overflow: hidden; }
</style>

<style scoped>
* { box-sizing: border-box; }
.defs { position: absolute; width: 0; height: 0; }
.screen { display: grid; grid-template-columns: minmax(0, 1fr) 523px; height: 100vh; font: 14px/20px "Open Sans", "Noto Sans", sans-serif; color: #101010; background: #f0f0f0; }
button { font: inherit; color: inherit; background: none; border: 0; padding: 0; display: flex; align-items: center; }
h1, h2, h3, h4, p, ul { margin: 0; padding: 0; font-size: 14px; font-weight: 400; }
a { color: inherit; text-decoration: none; }
svg { display: block; flex: none; }
.s12 { width: 12px; height: 12px; }
.s18 { width: 18px; height: 18px; }
.s20 { width: 20px; height: 20px; }
.s40 { width: 40px; height: 40px; }
.down { width: 8px; height: 4px; }
.tri { width: 6px; height: 8px; }

.left { display: flex; flex-direction: column; min-width: 0; overflow: hidden; border-right: 1px solid #666; background: #f6f6f6; }
.desktop { flex: none; height: 5px; display: flex; align-items: flex-end; gap: 14px; padding-left: 3px; overflow: hidden; color: #fff; background: linear-gradient(90deg, #021a38, #003a6c); }
.desktop span { line-height: 16px; }
.titlebar { flex: none; height: 38px; display: flex; align-items: center; background: #fff; padding-left: 8px; }
.caption { margin-left: 5px; color: #8c8c8c; }
.winbtns { margin-left: auto; display: flex; gap: 47px; margin-right: -4px; }

.navbar { flex: none; height: 41px; display: flex; align-items: flex-start; background: #d6e4f1; border-bottom: 1px solid #abbccb; padding: 5px 0 0 3px; }
.travel { display: flex; justify-content: space-between; align-items: center; width: 68px; height: 30px; padding: 0 6px; border-radius: 14px; background: linear-gradient(#b5c2cf, #cfdbe7 50%, #dde9f4); box-shadow: inset 0 1px 2px #8798a8; }
.address { flex: 1; display: flex; align-items: center; gap: 15px; height: 28px; margin-left: 25px; padding-left: 5px; background: #f3f7fc; border: 1px solid #afc0d0; }
.address .s20 { margin-right: -6px; }
.navtools { display: flex; align-items: center; gap: 9px; margin: 1px -6px 0 10px; }
.navsep { width: 2px; height: 18px; margin: 0 -2px; background: #f8fbfd; border-left: 1px solid #b8c4d0; }
.menubar { flex: none; height: 32px; display: flex; align-items: center; gap: 24px; padding: 0 0 2px 17px; background: linear-gradient(#fefefe, #e2e2e2); }

.body { flex: 1; min-height: 0; display: flex; gap: 8px; }
.panel { position: relative; display: flex; flex-direction: column; border: 1px solid #999; }
.panelhead { position: relative; z-index: 1; flex: none; height: 28px; padding-left: 8px; line-height: 29px; font-weight: 700; background: #bcb8bb; }
.connections { flex: none; width: 249px; border-left-color: #bbb; background: #fff; }
.treetools { flex: none; height: 32px; display: flex; align-items: center; padding-left: 2px; background: linear-gradient(#fbfbfb, #e4e2e4); border-bottom: 2px solid #8e8eac; }
.treetools .drop { gap: 3px; margin-right: 7px; }
.sep { width: 2px; height: 20px; margin: 0 5px 0 9px; background: #d2d2c0; }
.treewrap { position: relative; }
.tree { display: grid; grid-auto-rows: 1fr; height: 248px; list-style: none; }
.tree li { position: relative; display: flex; align-items: stretch; }
.tree a { display: flex; align-items: center; gap: 6px; padding: 0 4px 0 0; }
.tree a.selected { background: #d9d9d9; }
.twist { width: 12px; margin: 0 9px 0 6px; }
.level1 { padding-left: 24px; }
.level2 { padding-left: 48px; }
.level3 { padding-left: 72px; }
.level4 { padding-left: 95px; }
.level5 { padding-left: 119px; }
.scribble { position: absolute; left: 52px; top: -1px; width: 200px; height: 24px; z-index: 2; }
.dots { position: absolute; left: -1px; top: 0; pointer-events: none; }
.dots path { fill: none; stroke: #909090; stroke-dasharray: 1 1; }
.hscroll { margin-top: auto; height: 18px; display: flex; background: #f0f0f0; }
.hscroll button, .vscroll button { width: 20px; height: 20px; justify-content: center; }
.hscroll button { height: 18px; }
.htrack { flex: 1; }
.hthumb { width: 75%; height: 100%; background: #cdcdcd; }

.center { flex: 1; min-width: 0; display: flex; flex-direction: column; }
.workspace { flex: 1; min-height: 0; display: flex; flex-direction: column; background: #fff; border: 1px solid #999; padding: 0 15px 15px 16px; }
.pagehead { flex: none; height: 63px; display: flex; align-items: center; gap: 24px; padding-top: 6px; }
.big { width: 38px; height: 38px; }
h1 { font-size: 22px; line-height: 28px; padding-bottom: 8px; }
.features { flex: 1; min-height: 0; display: flex; flex-direction: column; border: 1px solid #e3e3e3; }
.filterbar { flex: none; height: 37px; display: flex; align-items: center; padding: 2px 0 0 8px; background: linear-gradient(#fbfbfb, #e2e0e2); border-bottom: 2px solid #66608a; }
.combo { position: relative; display: flex; align-items: center; height: 28px; background: #fff; }
.combo .down { position: absolute; right: 5px; pointer-events: none; }
.combo input, .combo select { width: 100%; height: 100%; border: 0; background: transparent; font: inherit; color: inherit; padding: 0 5px; appearance: none; outline: 0; }
.filtercombo { width: 151px; margin-left: 6px; }
.go { gap: 5px; margin-left: 5px; color: #8c8c8c; }
.go .down { fill: #999; margin-left: 7px; }
.showall { gap: 4px; margin-left: 6px; }
.showall + .sep { margin: 0 6px 0 11px; }
.groupcombo { width: 143px; margin-left: 7px; }
.thumbs { gap: 2px; margin-left: 4px; }
.listwrap { flex: 1; min-height: 0; display: flex; }
.list { flex: 1; min-width: 0; overflow: hidden; }
.list section { margin-bottom: 7px; }
.list h3 { display: flex; align-items: center; height: 24px; padding: 0 12px 0 15px; color: #4646a6; }
.list h3 i { flex: 1; height: 2px; margin: 0 11px 0 6px; background: #c5d0ea; }
.grid { display: grid; grid-template-columns: repeat(9, minmax(0, 1fr)); column-gap: 4px; grid-auto-rows: 93px; padding-right: 6px; }
.grid button { flex-direction: column; padding-top: 5px; white-space: nowrap; line-height: 19px; }
.grid .s40 { margin-bottom: 4px; }
.vscroll { width: 20px; display: flex; flex-direction: column; background: #f0f0f0; }
.vtrack { flex: 1; }
.vthumb { height: 53%; background: #cdcdcd; }
.tabs { flex: none; display: flex; gap: 4px; height: 34px; padding: 4px 0 5px 7px; }
.tabs button { gap: 4px; }
.tabs .current { padding: 0 5px 0 2px; background: #fff; border: 1px solid #2a8ad8; }

.actions { flex: none; width: 223px; border-right: 0; background: linear-gradient(100deg, #fdfdfd, #ebebeb 90%); }
.actionlist { margin-top: -4px; }
.action { position: relative; display: flex; align-items: center; height: 25px; gap: 10px; padding-left: 6px; color: #3f97d8; }
.disabled { color: #a0a0a0; }
.actions hr { height: 2px; margin: 1px 2px 3px 6px; border: 0; background: linear-gradient(90deg, #e8e8e8, #a8a8a8 50%, #b4b4b4); }
.actions h4 { height: 25px; line-height: 25px; padding-left: 36px; font-weight: 700; color: #000; }
.actions h3 { display: flex; align-items: center; justify-content: space-between; height: 29px; margin-bottom: 2px; padding: 0 11px 0 9px; font-weight: 700; color: #000; background: linear-gradient(#dcdcdc, #fafafa); }
.actions h3 button { width: 20px; height: 20px; justify-content: center; border: 1px solid #999; border-radius: 50%; background: linear-gradient(#fff, #dcdcdc); }
.mark { position: absolute; fill: none; stroke: #ff0000; stroke-width: 2; stroke-linecap: round; }
.markleft { left: -14px; top: 0; width: 48px; height: 34px; }

.status { flex: none; display: flex; justify-content: space-between; height: 20px; line-height: 28px; padding-left: 4px; overflow: hidden; border-top: 2px solid #fdfdfd; background: linear-gradient(90deg, #e3e1e3, #f8f8f8); }
.status .s12 { margin: 4px -6px 0 0; }

.dialog { display: flex; flex-direction: column; gap: 4px; min-width: 0; padding: 15px 0 0 15px; border-top: 8px solid #fff; border-right: 1px solid #555; }
.gridbox { flex: 1; min-height: 0; background: #fff; border: 1px solid #a4a6a8; border-right: 0; padding-top: 1px; }
table { width: 100%; height: 333px; table-layout: fixed; border-collapse: collapse; }
.cgutter { width: 26px; }
.cname { width: 218px; }
td, th { padding: 0; height: 23px; line-height: 20px; text-align: left; font-weight: 400; white-space: nowrap; border-bottom: 1px solid #f3f6fc; }
th { padding-left: 6px; }
.gutter { background: #f3f6fc; }
.gutter svg { margin: 0 auto; }
.picked .gutter { position: relative; z-index: 1; }
.gutter .markright { left: -11px; top: 17px; width: 36px; height: 48px; }
.value { border-left: 1px solid #f3f6fc; padding-left: 5px; overflow: hidden; }
.strong, .group th { font-weight: 700; }
.group th { background: #f3f6fc; }
.muted { color: #808080; }
.picked th { background: #0078d7; color: #fff; }
.pathcell { display: flex; }
.pathcell span { flex: 1; min-width: 0; }
.pathcell button { width: 16px; height: 20px; padding-left: 3px; background: #e4e4e4; border: 1px solid #a8a8a8; border-right: 0; }
.describe { flex: none; height: 74px; margin-bottom: 1px; padding: 3px 7px; border: 1px solid #a4a6a8; border-right: 0; }
.describe h2 { line-height: 22px; font-weight: 700; }
.describe p { line-height: 22px; }
</style>
